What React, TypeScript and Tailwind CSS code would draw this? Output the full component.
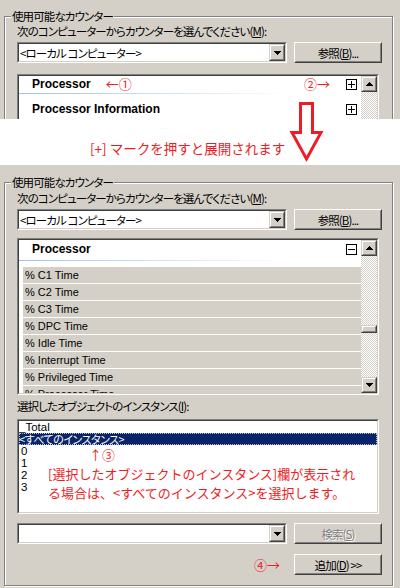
import React from "react";

const JP = "font-['Noto_Sans_CJK_JP',sans-serif] [font-feature-settings:'palt']";
const LAT = "font-['Liberation_Sans',sans-serif]";
const RED = "text-[#ee1c24]";
const UI = "text-[11.5px] leading-[14px] tracking-[-0.9px]";

function Sunken({ className = "", inner = "", children }: { className?: string; inner?: string; children?: React.ReactNode }) {
  return (
    <div className={`border border-t-[#808080] border-l-[#808080] border-r-white border-b-white ${className}`}>
      <div className={`h-full border border-t-[#404040] border-l-[#404040] border-r-[#d4d0c8] border-b-[#d4d0c8] ${inner}`}>
        {children}
      </div>
    </div>
  );
}

function Tri({ dir }: { dir: "up" | "down" }) {
  return (
    <svg width="7" height="4" viewBox="0 0 7 4" shapeRendering="crispEdges">
      {dir === "up" ? (
        <path d="M3 0h1v1h-1z M2 1h3v1h-3z M1 2h5v1h-5z M0 3h7v1h-7z" fill="black" />
      ) : (
        <path d="M0 0h7v1h-7z M1 1h5v1h-5z M2 2h3v1h-3z M3 3h1v1h-1z" fill="black" />
      )}
    </svg>
  );
}

function Raised({ className = "", children }: { className?: string; children?: React.ReactNode }) {
  return (
    <div className={`shrink-0 border border-t-[#d4d0c8] border-l-[#d4d0c8] border-r-[#404040] border-b-[#404040] bg-[#d4d0c8] ${className}`}>
      <div className="h-full border border-t-white border-l-white border-r-[#808080] border-b-[#808080] flex items-center justify-center">
        {children}
      </div>
    </div>
  );
}

function Btn({ children, disabled = false }: { children?: React.ReactNode; disabled?: boolean }) {
  return (
    <div className="shrink-0 w-[88px] h-[21px] border border-t-white border-l-white border-r-[#404040] border-b-[#404040] bg-[#d4d0c8]">
      <div
        className={`h-full border border-t-[#d4d0c8] border-l-[#d4d0c8] border-r-[#808080] border-b-[#808080] flex items-center justify-center whitespace-nowrap ${UI} ${
          disabled ? "text-[#808080] [text-shadow:1px_1px_0_#fff]" : "text-black"
        }`}
      >
        {children}
      </div>
    </div>
  );
}

function Combo({ text }: { text: string }) {
  return (
    <Sunken className="w-[270px] h-[21px] shrink-0" inner="bg-white flex items-center">
      <span className={`flex-1 pl-[1px] whitespace-nowrap overflow-hidden ${UI}`}>{text}</span>
      <Raised className="w-[16px] h-[17px]">
        <Tri dir="down" />
      </Raised>
    </Sunken>
  );
}

function PM({ minus = false }: { minus?: boolean }) {
  return (
    <svg width="11" height="11" viewBox="0 0 11 11" shapeRendering="crispEdges" className="shrink-0">
      <rect x="0.5" y="0.5" width="10" height="10" fill="white" stroke="black" />
      <path d="M2 5h7v1H2z" fill="black" />
      {!minus && <path d="M5 2h1v7H5z" fill="black" />}
    </svg>
  );
}

function Track({ className = "", children }: { className?: string; children?: React.ReactNode }) {
  return (
    <div
      className={`flex-1 flex flex-col bg-[image:repeating-conic-gradient(#d4d0c8_0%_25%,#ffffff_0%_50%)] bg-[length:2px_2px] ${className}`}
    >
      {children}
    </div>
  );
}

function GroupLabel() {
  return <div className={`-mt-[8px] ml-[6px] w-fit px-[1px] bg-[#d4d0c8] whitespace-nowrap ${UI}`}>使用可能なカウンター</div>;
}

const counters = [
  "% C1 Time",
  "% C2 Time",
  "% C3 Time",
  "% DPC Time",
  "% Idle Time",
  "% Interrupt Time",
  "% Privileged Time",
  "% Processor Time",
];

export default function App() {
  return (
    <div className={`w-[400px] h-[588px] bg-white relative overflow-hidden text-black ${JP}`}>
      {/* top (collapsed) snapshot */}
      <div className="h-[119px] bg-[#d4d0c8] overflow-hidden pt-[16px]">
        <div className="ml-[4px] w-[389px] h-[200px] border border-[#808080] shadow-[inset_1px_1px_0_#fff,1px_1px_0_#fff]">
          <GroupLabel />
          <div className="pl-[12px]">
            <div className={`mt-[1px] whitespace-nowrap ${UI}`}>
              次のコンピューターからカウンターを選んでください(<span className="underline">M</span>):
            </div>
            <div className="mt-[4px] flex gap-[7px]">
              <Combo text="<ローカル コンピューター>" />
              <Btn>
                参照(<span className="underline">B</span>)...
              </Btn>
            </div>
            <Sunken className="mt-[11px] w-[362px] h-[100px]" inner="bg-white flex overflow-hidden">
              <div className="flex-1 flex flex-col">
                <div className="h-[16px] flex items-center justify-between pl-[13px] pr-[4px]">
                  <div className="flex items-center">
                    <span className={`${LAT} font-bold text-[12px] leading-[14px]`}>Processor</span>
                    <span className={`ml-[15px] text-[13px] leading-[14px] ${RED}`}>←①</span>
                  </div>
                  <div className="flex items-center">
                    <span className={`mr-[16px] text-[13px] leading-[14px] ${RED}`}>②→</span>
                    <PM />
                  </div>
                </div>
                <div className="mt-[1px] h-px w-[272px] bg-linear-to-r from-[#9ec0ee] to-white" />
                <div className="h-[7px]" />
                <div className="h-[16px] flex items-center justify-between pl-[13px] pr-[4px]">
                  <span className={`${LAT} font-bold text-[12px] leading-[14px]`}>Processor Information</span>
                  <PM />
                </div>
              </div>
              <div className="w-[16px] flex flex-col">
                <Raised className="h-[16px]">
                  <Tri dir="up" />
                </Raised>
                <Track />
              </div>
            </Sunken>
          </div>
        </div>
      </div>

      {/* middle caption */}
      <div className="h-[46px] pt-[21px] pl-[90px]">
        <div className={`text-[13.5px] leading-[16px] [font-feature-settings:normal] whitespace-nowrap ${RED}`}>[+] マークを押すと展開されます</div>
      </div>

      {/* bottom (expanded) */}
      <div className="h-[423px] bg-[#d4d0c8] pt-[17px]">
        <div className="ml-[4px] w-[389px] border border-[#808080] shadow-[inset_1px_1px_0_#fff,1px_1px_0_#fff] pb-[10px]">
          <GroupLabel />
          <div className="pl-[12px] w-[377px]">
            <div className={`mt-[2px] whitespace-nowrap ${UI}`}>
              次のコンピューターからカウンターを選んでください(<span className="underline">M</span>):
            </div>
            <div className="mt-[4px] flex gap-[7px]">
              <Combo text="<ローカル コンピューター>" />
              <Btn>
                参照(<span className="underline">B</span>)...
              </Btn>
            </div>

            <Sunken className="mt-[8px] w-[362px] h-[157px]" inner="bg-white flex overflow-hidden">
              <div className="flex-1 flex flex-col overflow-hidden">
                <div className="h-[18px] shrink-0 flex items-center justify-between pl-[13px] pr-[4px]">
                  <span className={`${LAT} font-bold text-[12px] leading-[14px]`}>Processor</span>
                  <PM minus />
                </div>
                <div className="mt-[2px] h-px shrink-0 w-[272px] bg-linear-to-r from-[#9ec0ee] to-white" />
                <div className="h-[6px] shrink-0" />
                {counters.map((c) => (
                  <div
                    key={c}
                    className={`ml-[4px] h-[17px] shrink-0 bg-[#d4d0c8] border-b border-white pl-[2px] text-[11px] leading-[16px] whitespace-nowrap ${LAT}`}
                  >
                    {c}
                  </div>
                ))}
              </div>
              <div className="w-[16px] flex flex-col">
                <Raised className="h-[16px]">
                  <Tri dir="up" />
                </Raised>
                <Track>
                  <Raised className="mt-[69px] h-[8px]" />
                </Track>
                <Raised className="h-[16px]">
                  <Tri dir="down" />
                </Raised>
              </div>
            </Sunken>

            <div className={`mt-[4px] whitespace-nowrap ${UI}`}>
              選択したオブジェクトのインスタンス(<span className="underline">I</span>):
            </div>

            <Sunken className="mt-[6px] w-[362px] h-[95px]" inner="bg-white flex flex-col overflow-hidden">
              <div className={`h-[12px] text-[11.5px] leading-[12px] ${LAT}`}>_Total</div>
              <div className="h-[12px] bg-[#0a246a] text-white text-[11px] leading-[12px] tracking-[-0.5px] outline-1 outline-dotted outline-[#b8c0d8] -outline-offset-1 whitespace-nowrap">
                &lt;すべてのインスタンス&gt;
              </div>
              {["0", "1", "2", "3"].map((n) => (
                <div key={n} className={`h-[12px] pl-[2px] text-[11.5px] leading-[12px] ${LAT}`}>
                  {n}
                </div>
              ))}
            </Sunken>

            <div className="mt-[9px] flex gap-[7px]">
              <Combo text="" />
              <Btn disabled>
                検索(<span className="underline">S</span>)
              </Btn>
            </div>

            <div className="mt-[10px] w-[365px] flex items-center justify-end">
              <span className={`mr-[14px] text-[13px] leading-[14px] ${RED}`}>④→</span>
              <Btn>
                追加(<span className="underline">D</span>) &gt;&gt;
              </Btn>
            </div>
          </div>
        </div>
      </div>

      {/* annotations over the instance list */}
      <div className={`absolute left-[89px] top-[448px] text-[13px] leading-[14px] ${RED}`}>↑③</div>
      <div className={`absolute left-[48px] top-[464px] text-[13px] leading-[19px] whitespace-nowrap [font-feature-settings:normal] ${RED}`}>
        <div>[選択したオブジェクトのインスタンス]欄が表示され</div>
        <div>る場合は、&lt;すべてのインスタンス&gt;を選択します。</div>
      </div>

      {/* big hollow arrow */}
      <svg className="absolute left-[285px] top-[99px]" width="44" height="68" viewBox="285 99 44 68">
        <polygon
          points="300.5,103.5 312.5,103.5 312.5,132.5 321,132.5 306.5,159 292,132.5 300.5,132.5"
          fill="white"
          stroke="#ee1c24"
          strokeWidth="3"
        />
      </svg>
    </div>
  );
}
